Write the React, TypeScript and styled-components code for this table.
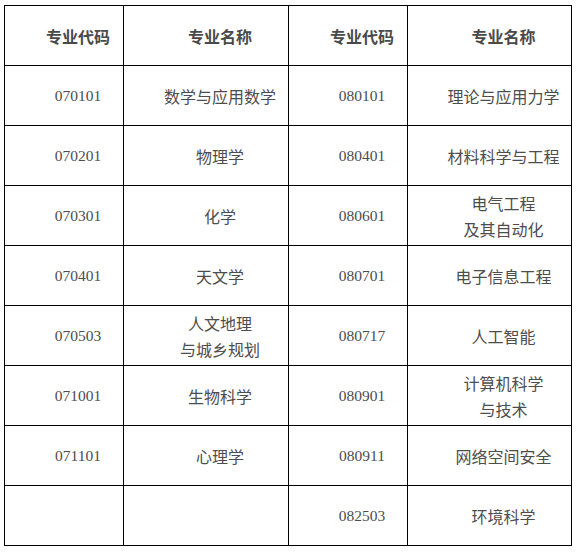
import styled, { createGlobalStyle } from 'styled-components';

const Global = createGlobalStyle`
  html, body {
    margin: 0;
    padding: 0;
    background: #fff;
  }
  body {
    font-family: "Noto Sans CJK SC", "Noto Sans", sans-serif;
  }
`;

const Page = styled.div`
  padding: 5px 0 0 4px;
`;

const Table = styled.table`
  border-collapse: collapse;
  table-layout: fixed;
  width: 567px;
`;

const Col = styled.col<{ $w: number }>`
  width: ${({ $w }) => $w}px;
`;

const HeadCell = styled.th`
  height: 59px;
  border: 1px solid #000;
  padding: 0 0 0 28px;
  text-align: center;
  vertical-align: middle;
  font-family: "Noto Sans CJK SC", sans-serif;
  font-size: 16px;
  font-weight: 700;
  color: #4a4a4a;
`;

const Cell = styled.td<{ $code?: boolean }>`
  height: 59px;
  border: 1px solid #000;
  padding: 0 0 0 28px;
  text-align: center;
  vertical-align: middle;
  color: #4d4d4d;
  font-family: ${({ $code }) =>
    $code ? '"Liberation Serif", serif' : '"Noto Sans CJK SC", sans-serif'};
  font-size: ${({ $code }) => ($code ? '15.5px' : '16px')};
  line-height: 26px;
`;

type Major = [string, string];

const ROWS: [Major, Major][] = [
  [['070101', '数学与应用数学'], ['080101', '理论与应用力学']],
  [['070201', '物理学'], ['080401', '材料科学与工程']],
  [['070301', '化学'], ['080601', '电气工程\n及其自动化']],
  [['070401', '天文学'], ['080701', '电子信息工程']],
  [['070503', '人文地理\n与城乡规划'], ['080717', '人工智能']],
  [['071001', '生物科学'], ['080901', '计算机科学\n与技术']],
  [['071101', '心理学'], ['080911', '网络空间安全']],
  [['', ''], ['082503', '环境科学']],
];

function Name({ text }: { text: string }) {
  const lines = text.split('\n');
  return (
    <>
      {lines.map((l, i) => (
        <span key={i}>
          {l}
          {i < lines.length - 1 && <br />}
        </span>
      ))}
    </>
  );
}

export default function App() {
  return (
    <Page>
      <Global />
      <Table>
        <colgroup>
          <Col $w={119} />
          <Col $w={165} />
          <Col $w={119} />
          <Col $w={164} />
        </colgroup>
        <thead>
          <tr>
            <HeadCell>专业代码</HeadCell>
            <HeadCell>专业名称</HeadCell>
            <HeadCell>专业代码</HeadCell>
            <HeadCell>专业名称</HeadCell>
          </tr>
        </thead>
        <tbody>
          {ROWS.map(([a, b], i) => (
            <tr key={i}>
              <Cell $code>{a[0]}</Cell>
              <Cell>
                <Name text={a[1]} />
              </Cell>
              <Cell $code>{b[0]}</Cell>
              <Cell>
                <Name text={b[1]} />
              </Cell>
            </tr>
          ))}
        </tbody>
      </Table>
    </Page>
  );
}
